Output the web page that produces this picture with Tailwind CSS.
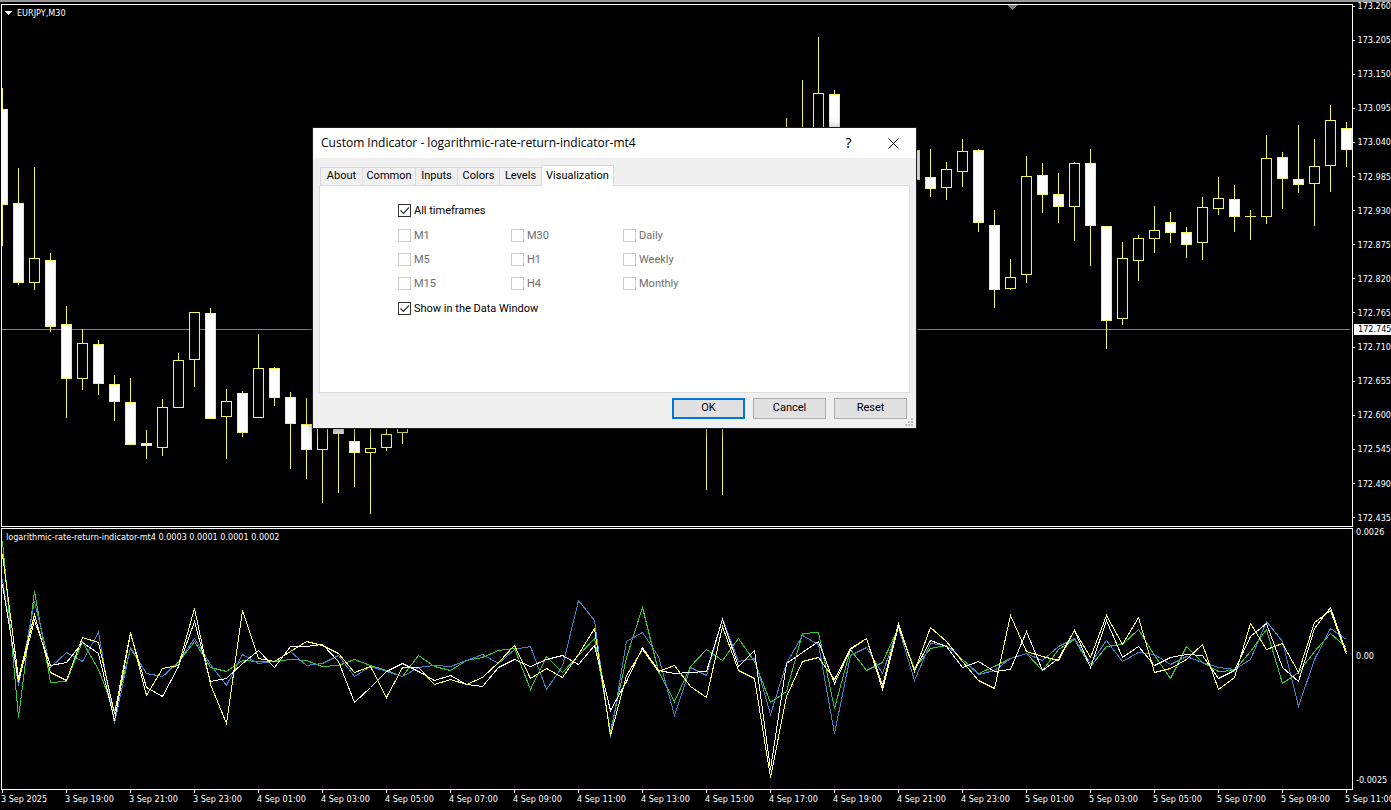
<!DOCTYPE html>
<html lang="en">
<head>
    <meta charset="UTF-8">
    <meta name="viewport" content="width=device-width, initial-scale=1.0">
    <title>EURJPY,M30</title>
    <script src="https://cdn.jsdelivr.net/npm/@tailwindcss/browser@4"></script>
</head>

<body class="relative flex h-screen flex-col overflow-hidden border-t-2 border-[#999] bg-black font-['DejaVu_Sans_Condensed','DejaVu_Sans',sans-serif] text-[9px] text-white">

    <main class="flex min-h-0 flex-1">

        <!--Both chart windows-->
        <div class="flex min-w-0 flex-1 flex-col gap-px pt-0.5 pl-px">
            <section class="relative min-h-0 flex-[524] overflow-hidden border border-white">
                <svg id="priceChart" class="absolute inset-0 h-full w-full" shape-rendering="crispEdges"></svg>
                <h1 class="relative flex items-center gap-1 pl-[3px] leading-4">
                    <svg class="h-1 w-2" viewBox="0 0 8 4" shape-rendering="crispEdges"><path d="M0 0h7v1h-1v1h-1v1h-1v1h-1v-1h-1v-1h-1v-1h-1z" fill="#fff"/></svg>
                    EURJPY,M30
                </h1>
            </section>
            <section class="relative min-h-0 flex-[261] overflow-hidden border border-white">
                <svg id="indicatorChart" class="absolute inset-0 h-full w-full" shape-rendering="crispEdges"></svg>
                <h2 class="relative pl-1 leading-4">logarithmic-rate-return-indicator-mt4 0.0003 0.0001 0.0001 0.0002</h2>
            </section>
        </div>

        <!--Price scale on the right-->
        <div class="flex w-[38px] flex-col">
            <div class="relative min-h-0 flex-[525]">
                <ul id="priceScale" class="flex h-full flex-col justify-between"></ul>
                <div class="absolute top-[322px] right-0 left-px bg-white pl-1 leading-[11px] text-black">172.745</div>
            </div>
            <ul class="flex min-h-0 flex-[263] flex-col justify-between py-1 pl-[3px] leading-3">
                <li>0.0026</li>
                <li>0.00</li>
                <li>-0.0025</li>
            </ul>
        </div>
    </main>

    <!--Time scale-->
    <ul id="timeScale" class="flex h-5 overflow-hidden pl-px"></ul>

    <!--Indicator properties window-->
    <div role="dialog" aria-labelledby="dialogTitle" class="absolute top-[126px] left-[313px] flex h-[300px] w-[603px] flex-col bg-[#f0f0f0] font-[Roboto,sans-serif] text-[11px] text-black shadow-[0_0_0_1px_#1c1c1c,0_2px_12px_rgba(0,0,0,0.5)]">
        <div class="flex h-[30px] items-center bg-white pl-2">
            <h2 id="dialogTitle" class="flex-1 font-['Open_Sans','Noto_Sans',sans-serif] text-xs">Custom Indicator - logarithmic-rate-return-indicator-mt4</h2>
            <button type="button" aria-label="Help" class="h-full w-[45px] font-['Noto_Sans',sans-serif] text-sm">?</button>
            <button type="button" aria-label="Close" class="flex h-full w-[45px] items-center justify-center">
                <svg class="size-[11px]" viewBox="0 0 11 11"><path d="M.5 .5l10 10M10.5 .5l-10 10" stroke="#000" fill="none"/></svg>
            </button>
        </div>

        <div class="flex flex-1 flex-col px-1.5 pt-[7px]">
            <div role="tablist" class="flex items-end pl-px">
                <button type="button" role="tab" class="h-[18px] w-[42px] border-t border-l border-[#d9d9d9]">About</button>
                <button type="button" role="tab" class="h-[18px] w-[53px] border-t border-l border-[#d9d9d9]">Common</button>
                <button type="button" role="tab" class="h-[18px] w-[42px] border-t border-l border-[#d9d9d9]">Inputs</button>
                <button type="button" role="tab" class="h-[18px] w-[42px] border-t border-l border-[#d9d9d9]">Colors</button>
                <button type="button" role="tab" class="h-[18px] w-[42px] border-t border-l border-[#d9d9d9]">Levels</button>
                <button type="button" role="tab" aria-selected="true" class="relative z-10 -mb-px h-[21px] w-[73px] border-x border-t border-[#d9d9d9] bg-white">Visualization</button>
            </div>

            <div role="tabpanel" class="flex h-[208px] flex-col gap-3 border border-[#dcdcdc] bg-white pt-[18px] pl-[78px] leading-[13px]">
                <label class="relative flex items-center gap-[3px]">
                    <input type="checkbox" checked class="peer size-[13px] appearance-none border border-[#333] bg-white">
                    <svg class="absolute left-0 hidden size-[13px] peer-checked:block" viewBox="0 0 13 13"><path d="M2.5 6.5l3 3 5.5-6" stroke="#333" stroke-width="1.2" fill="none"/></svg>
                    All timeframes
                </label>
                <div class="grid grid-cols-[113px_112px_113px] gap-y-[11px] text-[#6d6d6d]">
                    <label class="flex items-center gap-[3px]"><input type="checkbox" disabled class="size-[13px] appearance-none border border-[#ccc]">M1</label>
                    <label class="flex items-center gap-[3px]"><input type="checkbox" disabled class="size-[13px] appearance-none border border-[#ccc]">M30</label>
                    <label class="flex items-center gap-[3px]"><input type="checkbox" disabled class="size-[13px] appearance-none border border-[#ccc]">Daily</label>
                    <label class="flex items-center gap-[3px]"><input type="checkbox" disabled class="size-[13px] appearance-none border border-[#ccc]">M5</label>
                    <label class="flex items-center gap-[3px]"><input type="checkbox" disabled class="size-[13px] appearance-none border border-[#ccc]">H1</label>
                    <label class="flex items-center gap-[3px]"><input type="checkbox" disabled class="size-[13px] appearance-none border border-[#ccc]">Weekly</label>
                    <label class="flex items-center gap-[3px]"><input type="checkbox" disabled class="size-[13px] appearance-none border border-[#ccc]">M15</label>
                    <label class="flex items-center gap-[3px]"><input type="checkbox" disabled class="size-[13px] appearance-none border border-[#ccc]">H4</label>
                    <label class="flex items-center gap-[3px]"><input type="checkbox" disabled class="size-[13px] appearance-none border border-[#ccc]">Monthly</label>
                </div>
                <label class="relative flex items-center gap-[3px]">
                    <input type="checkbox" checked class="peer size-[13px] appearance-none border border-[#333] bg-white">
                    <svg class="absolute left-0 hidden size-[13px] peer-checked:block" viewBox="0 0 13 13"><path d="M2.5 6.5l3 3 5.5-6" stroke="#333" stroke-width="1.2" fill="none"/></svg>
                    Show in the Data Window
                </label>
            </div>

            <div class="flex justify-end gap-2 pt-[5px] pr-[3px]">
                <button type="button" class="h-[21px] w-[73px] border-2 border-[#0078d7] bg-[#e1e1e1]">OK</button>
                <button type="button" class="h-[21px] w-[73px] border border-[#adadad] bg-[#e1e1e1]">Cancel</button>
                <button type="button" class="h-[21px] w-[73px] border border-[#adadad] bg-[#e1e1e1]">Reset</button>
            </div>
        </div>

        <!--Resize grip-->
        <svg class="absolute right-[3px] bottom-0.5 size-2" viewBox="0 0 8 8" shape-rendering="crispEdges"><path d="M6 0h2v2h-2zM3 3h2v2h-2zM6 3h2v2h-2zM0 6h2v2h-2zM3 6h2v2h-2zM6 6h2v2h-2z" fill="#bfbfbf"/></svg>
    </div>

    <script>

        //One bar every 16px, the first one sits at x = 2
        const STEP = 16;
        const FIRST = 2;

        //index: high, low, body top, body bottom, filled (bearish) or not
        const candles = {
            0: [88, 246, 109, 205, 1], 1: [168, 285, 203, 283, 1], 2: [167, 290, 258, 283, 0], 3: [253, 332, 260, 327, 1],
            4: [306, 418, 324, 379, 1], 5: [329, 390, 343, 379, 0], 6: [340, 395, 344, 384, 1], 7: [375, 421, 384, 402, 1],
            8: [378, 445, 402, 445, 1], 9: [430, 459, 443, 446, 1], 10: [399, 456, 407, 448, 0], 11: [353, 408, 360, 408, 0],
            12: [312, 387, 312, 360, 0], 13: [308, 419, 313, 419, 1], 14: [389, 459, 401, 417, 0], 15: [391, 437, 393, 433, 1],
            16: [334, 418, 368, 418, 0], 17: [367, 406, 368, 398, 1], 18: [392, 469, 397, 424, 1], 19: [398, 479, 424, 450, 1],
            20: [400, 503, 410, 450, 0], 21: [400, 493, 410, 434, 1], 22: [420, 487, 441, 453, 1], 23: [420, 514, 448, 453, 0],
            24: [420, 451, 434, 448, 0], 25: [410, 444, 415, 433, 0],
            44: [380, 490, 390, 410, 0], 45: [380, 495, 390, 410, 0],
            49: [118, 200, 140, 180, 0], 50: [80, 200, 140, 180, 0], 51: [37, 170, 93, 150, 0], 52: [90, 200, 94, 180, 1],
            57: [150, 180, 150, 180, 1], 58: [149, 197, 177, 189, 1], 59: [162, 200, 169, 188, 0], 60: [139, 187, 151, 172, 0],
            61: [149, 232, 150, 223, 1], 62: [210, 308, 225, 290, 1], 63: [259, 290, 277, 289, 0], 64: [156, 283, 176, 275, 0],
            65: [163, 213, 175, 195, 1], 66: [173, 223, 194, 207, 1], 67: [162, 241, 163, 207, 0], 68: [149, 266, 163, 226, 1],
            69: [226, 349, 226, 321, 1], 70: [242, 325, 258, 319, 0], 71: [235, 281, 238, 261, 0], 72: [206, 253, 230, 239, 0],
            73: [212, 243, 222, 233, 1], 74: [227, 258, 232, 245, 1], 75: [197, 260, 207, 243, 0], 76: [177, 215, 198, 209, 0],
            77: [185, 232, 199, 217, 1], 78: [210, 240, 216, 217, 0], 79: [135, 224, 158, 217, 0], 80: [152, 209, 157, 179, 1],
            81: [125, 193, 179, 185, 1], 82: [139, 226, 166, 184, 0], 83: [105, 192, 120, 166, 0], 84: [122, 167, 128, 150, 1]
        };

        //The four buffers of the indicator, in drawing order
        const buffers = [
            { color: '#32cd32', y: [542, 718, 592, 683, 682, 642, 670, 712, 649, 674, 677, 663, 642, 668, 672, 661, 662, 662, 660, 661, 667, 666, 660, 666, 671, 677, 656, 667, 671, 661, 658, 651, 649, 690, 657, 673, 656, 639, 732, 658, 608, 672, 702, 667, 650, 661, 639, 662, 703, 692, 634, 633, 709, 650, 671, 663, 628, 669, 649, 646, 660, 674, 667, 659, 654, 671, 650, 640, 667, 647, 645, 630, 656, 679, 647, 663, 672, 671, 652, 630, 684, 673, 652, 634, 648] },
            { color: '#4682cd', y: [580, 686, 602, 668, 653, 662, 633, 724, 648, 674, 677, 662, 639, 665, 686, 655, 664, 662, 652, 666, 664, 656, 677, 667, 672, 677, 668, 666, 667, 661, 655, 664, 650, 647, 690, 667, 601, 621, 738, 642, 633, 657, 716, 668, 676, 619, 662, 659, 715, 664, 636, 645, 734, 656, 648, 674, 628, 681, 644, 646, 660, 675, 671, 659, 654, 661, 647, 639, 664, 641, 662, 653, 655, 665, 657, 663, 668, 670, 660, 622, 642, 707, 660, 629, 640] },
            { color: '#ffffff', y: [585, 682, 621, 666, 663, 643, 654, 721, 634, 688, 697, 667, 622, 682, 679, 664, 651, 668, 647, 647, 645, 662, 703, 688, 672, 664, 672, 681, 676, 685, 687, 668, 660, 667, 660, 656, 665, 646, 711, 682, 648, 671, 674, 673, 672, 620, 667, 651, 770, 664, 653, 642, 684, 650, 639, 690, 627, 671, 641, 647, 668, 662, 672, 670, 632, 671, 659, 631, 668, 621, 658, 647, 666, 658, 655, 656, 679, 671, 637, 624, 668, 682, 629, 608, 653] },
            { color: '#ffff55', y: [555, 679, 615, 673, 681, 638, 643, 714, 633, 696, 669, 666, 609, 685, 724, 611, 659, 662, 652, 642, 646, 654, 673, 667, 698, 668, 668, 685, 680, 685, 678, 663, 646, 679, 669, 678, 655, 629, 736, 676, 650, 672, 666, 687, 698, 627, 671, 679, 778, 697, 662, 658, 680, 649, 639, 686, 624, 672, 628, 642, 662, 681, 689, 616, 652, 657, 661, 631, 658, 616, 645, 618, 673, 669, 660, 645, 690, 678, 624, 650, 644, 673, 623, 611, 655] }
        ];

        //Price chart: bid line, shift marker, then the candles
        let price = '<g transform="translate(-2 -5)">';
        price += '<rect x="0" y="329" width="100%" height="1" fill="#808080"/>';
        price += '<path d="M1008 5h9v1h-1v1h-1v1h-1v1h-1v1h-1v-1h-1v-1h-1v-1h-1v-1h-1z" fill="#778088"/>';
        for (const i in candles) {
            const [high, low, top, bottom, filled] = candles[i];
            const x = FIRST + i * STEP;
            price += `<rect x="${x}" y="${high}" width="1" height="${low - high}" fill="#f5f555"/>`;
            price += `<rect x="${x - 5}" y="${top}" width="11" height="${bottom - top}" fill="#f5f555"/>`;
            if (bottom - top > 2) {
                price += `<rect x="${x - 4}" y="${top + 1}" width="9" height="${bottom - top - 2}" fill="${filled ? '#fff' : '#000'}"/>`;
            }
        }
        document.getElementById('priceChart').innerHTML = price + '</g>';

        //Indicator chart
        let lines = '<g transform="translate(-2 -530)" fill="none">';
        buffers.forEach(buffer => {
            const points = buffer.y.map((y, i) => (FIRST + i * STEP + 0.5) + ',' + (y + 0.5)).join(' ');
            lines += `<polyline points="${points}" stroke="${buffer.color}"/>`;
        });
        document.getElementById('indicatorChart').innerHTML = lines + '</g>';

        //Price labels from 173.260 down, 55 points apart
        const priceScale = document.getElementById('priceScale');
        for (let i = 0; i < 16; i++) {
            const li = document.createElement('li');
            li.className = 'flex h-2 items-center gap-[3px] leading-2 before:h-px before:w-0.5 before:bg-white';
            li.textContent = (173.26 - i * 0.055).toFixed(3);
            priceScale.appendChild(li);
        }

        //Time labels, one every two hours
        const timeScale = document.getElementById('timeScale');
        for (let i = 0; i < 22; i++) {
            const hour = 17 + i * 2;
            const li = document.createElement('li');
            li.className = 'w-16 shrink-0 whitespace-nowrap leading-3 before:ml-px before:block before:h-[3px] before:w-px before:bg-white';
            li.textContent = (3 + Math.floor(hour / 24)) + ' Sep ' + (i === 0 ? '2025' : String(hour % 24).padStart(2, '0') + ':00');
            timeScale.appendChild(li);
        }

    </script>
</body>
</html>
